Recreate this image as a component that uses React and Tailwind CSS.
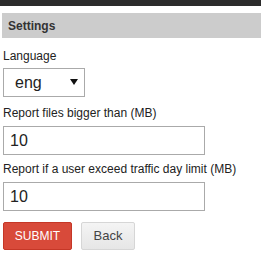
export default function App() {
  return (
    <div className="w-[261px] h-[263px] bg-white text-[#222] font-['Liberation_Sans',Arial,sans-serif] overflow-hidden">
      {/* top dark strip */}
      <div className="h-[6px] bg-[#2b2b2b]" />

      {/* panel title */}
      <div className="mt-[7px] ml-[2px] h-[25px] bg-[#cccccc] pl-[6px] flex items-center">
        <h2 className="text-[12px] font-bold text-[#333]">Settings</h2>
      </div>

      <form className="pl-[3px]" onSubmit={(e) => e.preventDefault()}>
        <label className="block mt-[11px] text-[12px] leading-[15px]">Language</label>
        <div className="relative mt-[4px] w-[82px] h-[29px]">
          <select
            defaultValue="eng"
            className="appearance-none w-full h-full border border-[#aaa] bg-white pl-[11px] text-[16px] text-[#222] outline-none"
          >
            <option value="eng">eng</option>
            <option value="rus">rus</option>
          </select>
          <span className="absolute right-[7px] top-[11px] w-0 h-0 border-l-[4px] border-r-[4px] border-t-[6px] border-l-transparent border-r-transparent border-t-[#111] pointer-events-none" />
        </div>

        <label className="block mt-[9px] text-[12px] leading-[15px]">Report files bigger than (MB)</label>
        <input
          type="text"
          defaultValue="10"
          className="block mt-[5px] w-[202px] h-[29px] border border-[#aaa] pl-[6px] text-[16px] text-[#222] outline-none"
        />

        <label className="block mt-[7px] text-[12px] leading-[15px]">Report if a user exceed traffic day limit (MB)</label>
        <input
          type="text"
          defaultValue="10"
          className="block mt-[5px] w-[202px] h-[29px] border border-[#aaa] pl-[6px] text-[16px] text-[#222] outline-none"
        />

        <div className="flex gap-[9px] mt-[11px]">
          <button type="submit" className="w-[69px] h-[28px] rounded-[2px] bg-[#d84a3a] border border-[#c53727] text-white text-[12px]">
            SUBMIT
          </button>
          <button type="button" className="w-[54px] h-[28px] rounded-[2px] bg-gradient-to-b from-[#f4f4f4] to-[#e6e6e6] border border-[#d6d6d6] text-[#444] text-[13px]">
            Back
          </button>
        </div>
      </form>
    </div>
  );
}
